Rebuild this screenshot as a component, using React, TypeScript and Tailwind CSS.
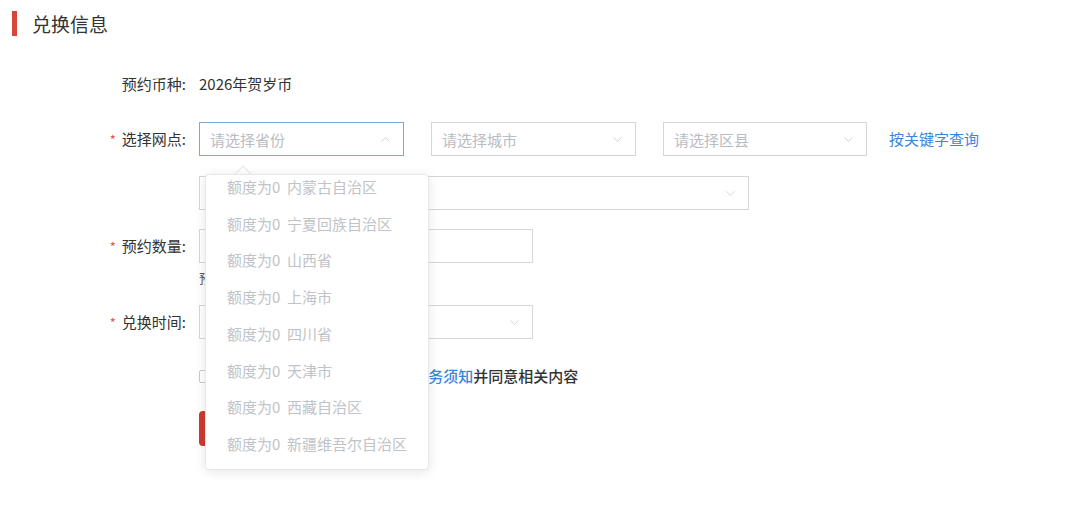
import React from 'react'
import { ChevronDown, ChevronUp } from 'lucide-react'

const font = { fontFamily: '"Noto Sans CJK SC", "Noto Sans", sans-serif' }

const options = [
  '内蒙古自治区',
  '宁夏回族自治区',
  '山西省',
  '上海市',
  '四川省',
  '天津市',
  '西藏自治区',
  '新疆维吾尔自治区',
]

const Label: React.FC<{ text: string; required?: boolean }> = ({ text, required }) => (
  <div className="w-[186px] shrink-0 text-right text-[15px] text-[#333] leading-[34px]">
    {required && <span className="text-[#e2574c] mr-[6px] text-[13px]">*</span>}
    {text}
  </div>
)

const Select: React.FC<{ placeholder?: string; width: string; open?: boolean }> = ({ placeholder, width, open }) => (
  <div
    className={`${width} h-[34px] flex items-center justify-between px-[10px] bg-white border ${
      open ? 'border-[#7ea7dc]' : 'border-[#d4d6da]'
    }`}
  >
    <span className="text-[15px] text-[#b9bcc2] leading-none">{placeholder}</span>
    {open
      ? <ChevronUp size={15} strokeWidth={1} className="text-[#b9bcc2]" />
      : <ChevronDown size={15} strokeWidth={1} className="text-[#b9bcc2]" />}
  </div>
)

export default function App() {
  return (
    <div className="relative w-[1080px] h-[506px] bg-white overflow-hidden" style={font}>
      {/* Header */}
      <div className="flex items-center h-[46px] pl-[12px]">
        <div className="w-[5px] h-[25px] bg-[#d6463b]" />
        <h2 className="ml-[15px] text-[19px] text-[#333] leading-none">兑换信息</h2>
      </div>

      {/* Form */}
      <div className="flex flex-col mt-[21px]">
        <div className="flex items-center h-[34px]">
          <Label text="预约币种:" />
          <span className="ml-[13px] text-[15px] text-[#333]">2026年贺岁币</span>
        </div>

        <div className="flex items-center h-[34px] mt-[21px]">
          <Label text="选择网点:" required />
          <div className="ml-[13px] flex items-center gap-[27px]">
            <Select placeholder="请选择省份" width="w-[205px]" open />
            <Select placeholder="请选择城市" width="w-[205px]" />
            <Select placeholder="请选择区县" width="w-[204px]" />
          </div>
          <span className="ml-[22px] text-[15px] text-[#3b84dc]">按关键字查询</span>
        </div>

        <div className="flex items-center h-[34px] mt-[20px]">
          <div className="w-[186px] shrink-0" />
          <div className="ml-[13px]">
            <Select width="w-[550px]" />
          </div>
        </div>

        <div className="flex items-center h-[34px] mt-[19px]">
          <Label text="预约数量:" required />
          <div className="ml-[13px] w-[334px] h-[34px] border border-[#d4d6da]" />
        </div>
        <div className="flex h-[20px] mt-[5px]">
          <div className="w-[186px] shrink-0" />
          <span className="ml-[13px] text-[13px] text-[#555] leading-[20px]">预约数量最多为20枚</span>
        </div>

        <div className="flex items-center h-[34px] mt-[17px]">
          <Label text="兑换时间:" required />
          <div className="ml-[13px]">
            <Select width="w-[334px]" />
          </div>
        </div>

        <div className="flex items-center h-[20px] mt-[27px]">
          <div className="w-[186px] shrink-0" />
          <div className="ml-[13px] flex items-center">
            <span className="w-[13px] h-[13px] border border-[#c8cbd0] rounded-[2px] bg-white" />
            <span className="ml-[2px] text-[15px] font-medium text-[#333]">
              本人已阅读<span className="text-[#3b84dc]">2026年贺岁币预约服务须知</span>并同意相关内容
            </span>
          </div>
        </div>

        <div className="flex items-center h-[35px] mt-[25px]">
          <div className="w-[186px] shrink-0" />
          <button className="ml-[13px] w-[200px] h-[35px] rounded-[4px] bg-[#d0392f] text-white text-[15px]">
            提交预约
          </button>
        </div>
      </div>

      {/* Province dropdown */}
      <div className="absolute left-[205px] top-[174px] w-[224px] h-[296px]">
        <div className="absolute left-[32px] -top-[6px] w-[12px] h-[12px] rotate-45 bg-white border-l border-t border-[#e6e8eb]" />
        <div className="relative w-full h-full bg-white rounded-[4px] border border-[#e6e8eb] shadow-[0_2px_12px_rgba(0,0,0,0.1)] overflow-hidden">
          <div className="-mt-[6px]">
            {options.map(o => (
              <div key={o} className="h-[36.7px] flex items-center pl-[21px] text-[15px] text-[#c0c3c8] whitespace-nowrap">
                额度为0&nbsp;&nbsp;{o}
              </div>
            ))}
          </div>
        </div>
      </div>
    </div>
  )
}
